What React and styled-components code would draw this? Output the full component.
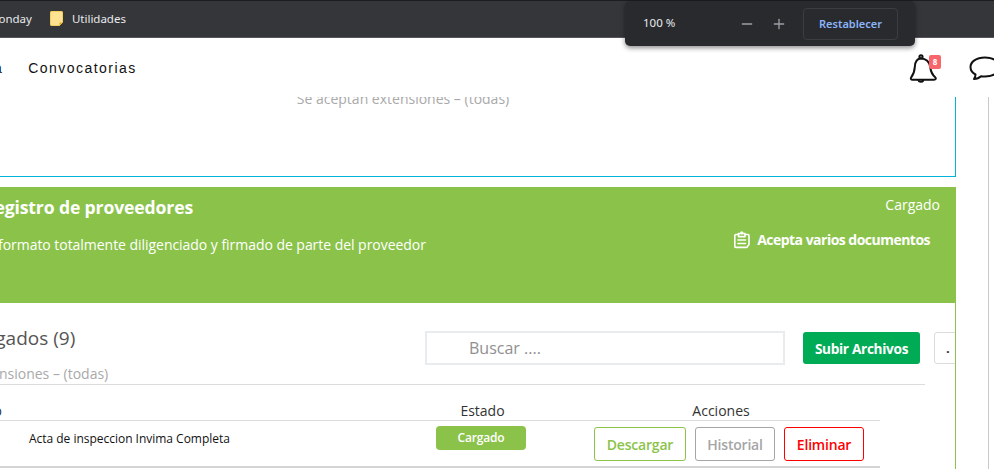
import React from "react";
import styled, { createGlobalStyle } from "styled-components";
import { Minus, Plus } from "lucide-react";

const Global = createGlobalStyle`
  html, body { margin: 0; padding: 0; background: #fff; }
  * { box-sizing: border-box; }
`;
const Page = styled.div`
  position: relative; width: 994px; height: 469px; overflow: hidden;
  display: flex; flex-direction: column; background: #fff;
  font-family: "Open Sans", sans-serif;
`;
const BrowserBar = styled.div`
  flex: none; height: 38px; background: #35363a; border-top: 1px solid #1c1d1f;
  display: flex; align-items: center; margin-left: -12px; padding-bottom: 1px;
  color: #e8eaed; font: 11.5px "Noto Sans", sans-serif; border-bottom: 1px solid #55565a;
`;
const Bookmark = styled.span`
  display: flex; align-items: center; gap: 9px; margin-right: 18px;
`;
const ZoomPopup = styled.div`
  position: absolute; z-index: 2; left: 625px; top: 1px; width: 290px; height: 45px;
  background: #292a2d; border-radius: 5px; box-shadow: 0 2px 5px rgba(0,0,0,.45);
  display: flex; align-items: center; color: #e8eaed; padding-left: 18px;
  font: 11.5px "Noto Sans", sans-serif;
`;
const ZoomValue = styled.span`width: 96px; margin-top: -2px;`;
const ZoomIcons = styled.span`
  display: flex; gap: 16px; color: #9aa0a6; width: 64px;
`;
const ResetButton = styled.span`
  width: 95px; height: 32px; border: 1px solid #3c3d40; border-radius: 4px;
  display: flex; align-items: center; justify-content: center;
  color: #8ab4f8; font-weight: 600; font-size: 11px;
`;
const Nav = styled.nav`
  position: relative; z-index: 1; flex: none; height: 59px; background: #fff;
  display: flex; align-items: center; justify-content: space-between;
  padding-top: 1px; font: 14px "Liberation Sans", sans-serif; letter-spacing: 1.45px; color: #111;
`;
const NavLinks = styled.div`
  display: flex; gap: 25px; margin-left: -65px;
`;
const NavIcons = styled.div`
  display: flex; align-items: center; gap: 30px; margin-right: -7px;
`;
const BellWrap = styled.span`position: relative; display: flex;`;
const Badge = styled.span`
  position: absolute; right: -2px; top: 1px; width: 12px; height: 14px; border-radius: 2px;
  background: #f6666b; color: #fff; font: bold 8px "Open Sans", sans-serif; letter-spacing: 0;
  display: flex; align-items: center; justify-content: center;
`;
const Main = styled.main`
  flex: 1; min-height: 0; display: flex;
`;
const Content = styled.div`
  width: 956px; flex: none; display: flex; flex-direction: column;
`;
const Gutter = styled.div`
  width: 33px; flex: none; border-right: 1px solid #c9c9c9;
`;
const TopCard = styled.section`
  height: 88px; flex: none; border-right: 1px solid #00b4dc; border-bottom: 1px solid #00b4dc;
  text-align: center; color: #a9a9a9; font-size: 14px; margin-top: -8px; padding-right: 149px; line-height: 19px;
`;
const Banner = styled.section`
  height: 116px; flex: none; margin-top: 10px; background: #8bc34a; color: #fff; overflow: hidden;
  display: flex; justify-content: space-between;
`;
const BannerLeft = styled.div`
  margin-left: -17px; padding-top: 7px; display: flex; flex-direction: column; gap: 15px;
`;
const BannerTitle = styled.h2`margin: 0; font-size: 17.6px; font-weight: 700; line-height: 26px; letter-spacing: -.14px;`;
const BannerText = styled.p`margin: 0 0 0 15px; font-size: 14px; line-height: 20px; letter-spacing: -.04px;`;
const BannerRight = styled.div`
  display: flex; flex-direction: column; align-items: flex-end; padding: 8px 16px 0 0;
`;
const Status = styled.span`font-size: 14px; line-height: 20px;`;
const Accept = styled.span`
  display: flex; align-items: center; gap: 6px; margin: 15px 10px 0 0; font-size: 14px; font-weight: 700; letter-spacing: -.52px;
  line-height: 20px;
`;
const Files = styled.section`
  flex: 1; border-right: 1px solid #8bc34a; overflow: hidden; padding-top: 27px;
`;
const Toolbar = styled.div`
  display: flex; height: 55px; border-bottom: 1px solid #dcdcdc; width: 925px;
`;
const Heading = styled.div`width: 425px; margin-left: -41px; flex: none;`;
const HeadingTitle = styled.h3`margin: -5px 0 0 6px; font-size: 19px; font-weight: 400; line-height: 26px; color: #555;`;
const HeadingSub = styled.p`margin: 15px 0 0 12px; font-size: 14px; line-height: 16px; color: #a9a9a9; white-space: nowrap;`;
const SearchBox = styled.div`
  width: 360px; height: 34px; border: 2px solid #e9ecef; margin: 1px 0 0 41px; flex: none;
  padding-left: 42px; color: #8f8f8f; font-size: 16px; line-height: 30px;
`;
const UploadButton = styled.span`
  width: 117px; height: 32px; margin: 2px 0 0 18px; flex: none; border-radius: 3px; background: #00ab55; color: #fff;
  display: flex; align-items: center; justify-content: center; font-weight: 700; font-size: 13.6px; letter-spacing: -.3px;
`;
const MoreButton = styled.span`
  width: 30px; height: 32px; margin: 2px 0 0 14px; flex: none; border: 1px solid #dcdcdc; border-radius: 3px;
  padding-left: 11px; line-height: 30px; color: #333; font-size: 13px; font-weight: 700;
`;
const Row = styled.div`
  width: 880px; display: grid; grid-template-columns: 435px 91px 68px 1fr; align-items: start;
`;
const HeadRow = styled(Row)`
  height: 36px; border-bottom: 1px solid #dcdcdc; font-size: 14px; color: #333; padding-top: 16px; line-height: 19px;
`;
const HeadLeft = styled.span`margin-left: -47px;`;
const HeadCenter = styled.span`text-align: center; margin-left: 4px;`;
const HeadActions = styled.span`grid-column: 4; text-align: center; margin-left: -32px;`;
const BodyRow = styled(Row)`
  height: 47px; border-bottom: 2px solid #d4d4d4;
`;
const FileName = styled.span`
  padding: 10px 0 0 29px; font-size: 12px; line-height: 16px; color: #111; letter-spacing: -.02px;
`;
const StateBadge = styled.span`
  margin: 5px 0 0 1px; height: 24px; border-radius: 4px; background: #8bc34a; color: #fff;
  display: flex; align-items: center; justify-content: center; font-size: 12px; font-weight: 600; letter-spacing: -.2px; padding-bottom: 2px;
`;
const Actions = styled.div`grid-column: 4; display: flex; margin-top: 6px; gap: 9px;`;
const ActionButton = styled.span`
  height: 34px; width: ${p => p.$w}px; border: 1px solid ${p => p.$c}; color: ${p => p.$c};
  border-radius: 3px; display: flex; align-items: center; justify-content: center;
  font-size: 14px; font-weight: 600; letter-spacing: -.2px;
`;
const Folder = () => (
  <svg width="13" height="15" viewBox="0 0 13 15">
    <path d="M.5 1.2a.7.7 0 0 1 .7-.7h10.6a.7.7 0 0 1 .7.7v10.3l-3 3H1.2a.7.7 0 0 1-.7-.7z" fill="#fde293" stroke="#f5cf5b" />
    <path d="M12.5 11.5l-3 3v-3z" fill="#e8a820" />
  </svg>
);
const BellIcon = () => (
  <svg width="30" height="29" viewBox="0 0 30 29" fill="none" stroke="#111" strokeWidth="2" strokeLinejoin="round" strokeLinecap="round">
    <circle cx="12" cy="2.8" r="1.6" />
    <path d="M12 4.4C7.5 4.4 6 8.5 5.8 13C5.5 18.5 4 21 2.2 23.3C1.3 24.6 2 25.8 3.5 25.8L25 25.8C26.8 25.8 27.5 24.3 26.2 23.2C23.5 21 21.8 17.5 21.2 13C20.6 8 17 4.4 12 4.4Z" />
    <path d="M9.5 26.5C10 28.2 13.5 28.2 14.2 26.5" />
  </svg>
);
const CommentIcon = () => (
  <svg width="32" height="25" viewBox="0 0 32 25" fill="none" stroke="#111" strokeWidth="2" strokeLinejoin="round">
    <path d="M16 1.5C7 1.5 1.5 6 1.5 11C1.5 14.5 3.5 17 6.5 18.5C6.5 20 6 21.5 5 23C8 23 10.5 21.8 12 20.3C13.5 20.5 15 20.5 16 20.5C25 20.5 30.5 16 30.5 11C30.5 6 25 1.5 16 1.5Z" />
  </svg>
);
const ClipIcon = () => (
  <svg width="18" height="18" viewBox="0 0 18 18" fill="none" stroke="#fff" strokeWidth="1.6" strokeLinejoin="round" strokeLinecap="round">
    <path d="M5.5 3.5H2.8A1 1 0 0 0 1.8 4.5V15.4A1 1 0 0 0 2.8 16.4H13.5A1 1 0 0 0 14.5 15.4L16 13.5V4.5A1 1 0 0 0 15 3.5H12" />
    <path d="M5.5 2.5H12V5.6H5.5Z" />
    <circle cx="8.8" cy="1.8" r=".8" />
    <path d="M5 9H12.5M5 12.5H12.5" />
  </svg>
);
export default function App() {
  return (
    <Page>
      <Global />
      <BrowserBar>
        <Bookmark>Monday</Bookmark>
        <Bookmark><Folder />Utilidades</Bookmark>
      </BrowserBar>
      <Nav>
        <NavLinks>
          <span>Auditoria</span>
          <span>Convocatorias</span>
        </NavLinks>
        <NavIcons>
          <BellWrap>
            <BellIcon />
            <Badge>8</Badge>
          </BellWrap>
          <CommentIcon />
        </NavIcons>
      </Nav>
      <Main>
        <Content>
          <TopCard>Se aceptan extensiones – (todas)</TopCard>
          <Banner>
            <BannerLeft>
              <BannerTitle>Registro de proveedores</BannerTitle>
              <BannerText>formato totalmente diligenciado y firmado de parte del proveedor</BannerText>
            </BannerLeft>
            <BannerRight>
              <Status>Cargado</Status>
              <Accept><ClipIcon />Acepta varios documentos</Accept>
            </BannerRight>
          </Banner>
          <Files>
            <Toolbar>
              <Heading>
                <HeadingTitle>Cargados (9)</HeadingTitle>
                <HeadingSub>Extensiones – (todas)</HeadingSub>
              </Heading>
              <SearchBox>Buscar ....</SearchBox>
              <UploadButton>Subir Archivos</UploadButton>
              <MoreButton>.</MoreButton>
            </Toolbar>
            <HeadRow>
              <HeadLeft>Archivo</HeadLeft>
              <HeadCenter>Estado</HeadCenter>
              <HeadActions>Acciones</HeadActions>
            </HeadRow>
            <BodyRow>
              <FileName>Acta de inspeccion Invima Completa</FileName>
              <StateBadge>Cargado</StateBadge>
              <Actions>
                <ActionButton $w={92} $c="#8bc34a">Descargar</ActionButton>
                <ActionButton $w={80} $c="#a5a5a5">Historial</ActionButton>
                <ActionButton $w={80} $c="#ff0000">Eliminar</ActionButton>
              </Actions>
            </BodyRow>
          </Files>
        </Content>
        <Gutter />
      </Main>
      <ZoomPopup>
        <ZoomValue>100 %</ZoomValue>
        <ZoomIcons><Minus size={16} strokeWidth={2} /><Plus size={16} strokeWidth={2} /></ZoomIcons>
        <ResetButton>Restablecer</ResetButton>
      </ZoomPopup>
    </Page>
  );
}
